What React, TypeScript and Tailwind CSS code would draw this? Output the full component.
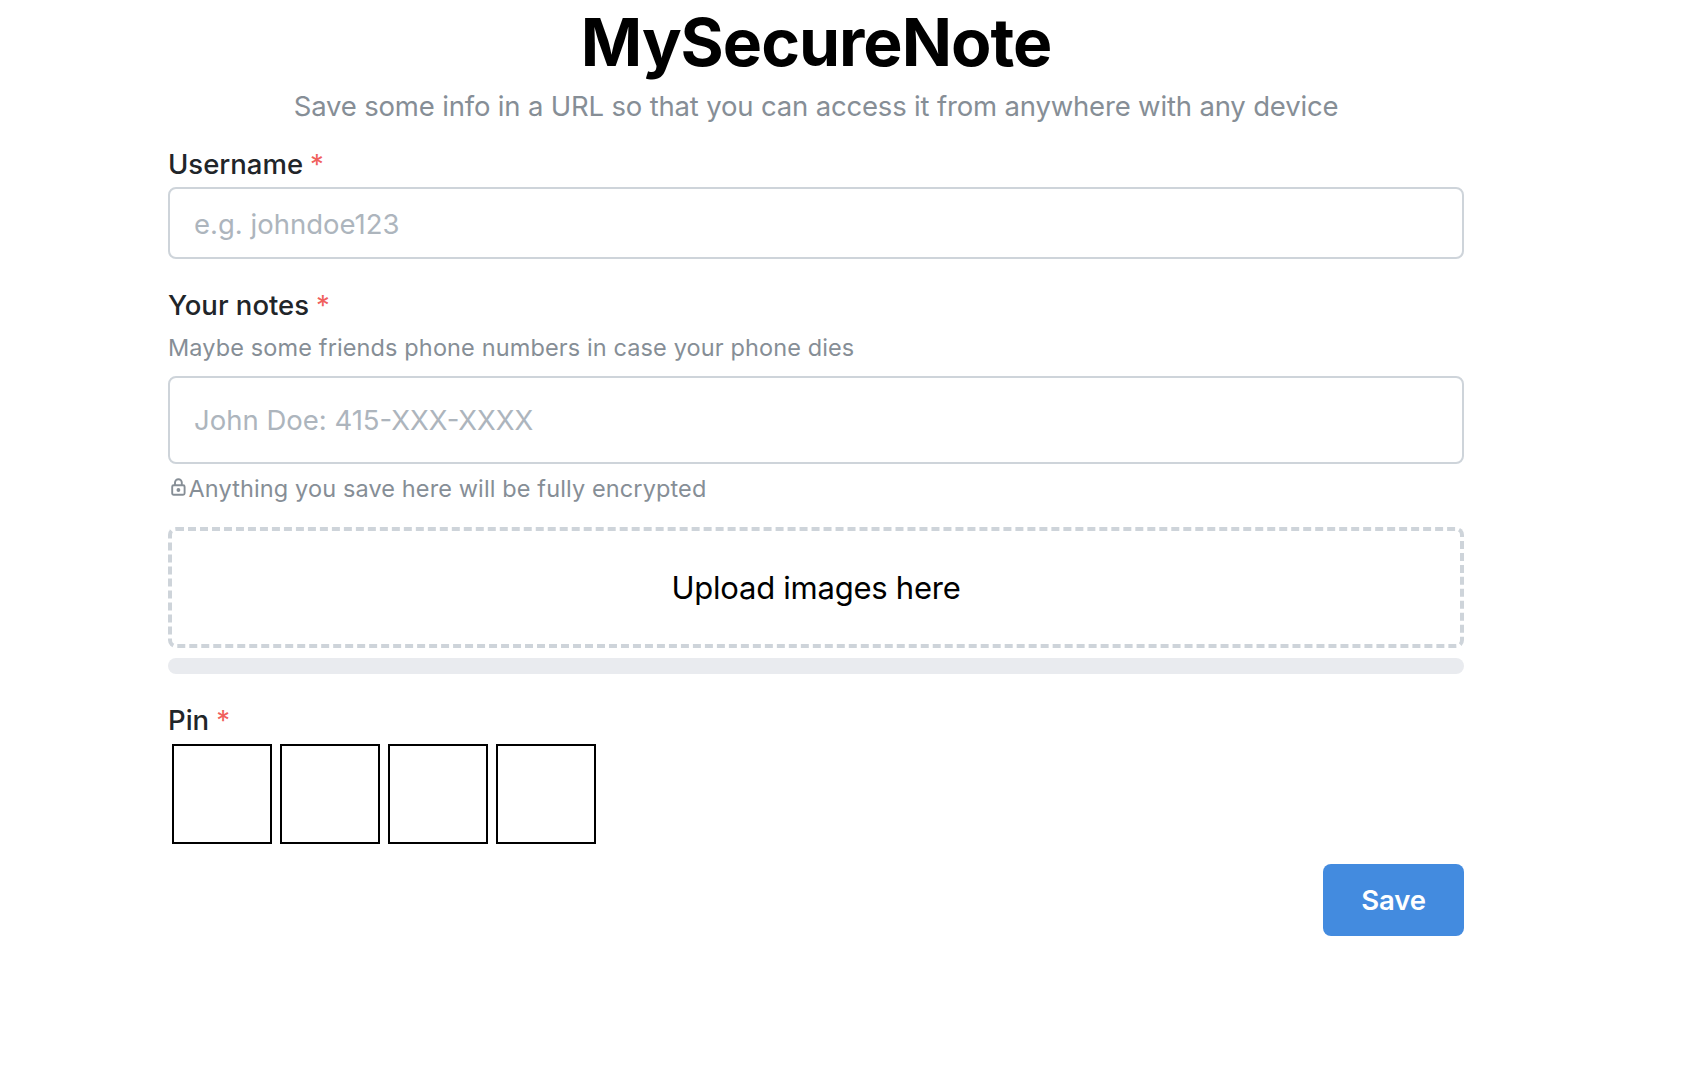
import type { ReactNode } from "react";

function Label({ children }: { children: ReactNode }) {
  return (
    <div className="flex h-[44px] items-center whitespace-pre text-[27.5px] font-medium leading-[44px] text-[#212529]">
      <span>{children}</span>
      <span className="ml-[7px] font-normal text-[#f0605d]">*</span>
    </div>
  );
}

function LockIcon() {
  return (
    <svg className="ml-[2.5px] mt-[-3px] h-[18px] w-[15px] shrink-0" viewBox="0 0 15 18" fill="none" stroke="#868e96" strokeWidth="1.9">
      <rect x="1.2" y="7.2" width="12.4" height="9.6" rx="1.5" />
      <path d="M4 7V4.6a3.4 3.4 0 0 1 6.8 0V7" />
      <circle cx="7.4" cy="12" r="1.9" fill="#868e96" stroke="none" />
    </svg>
  );
}

export default function App() {
  return (
    <div className="h-[1068px] w-full overflow-hidden bg-white font-['Inter',sans-serif] text-black">
      <div className="ml-[168px] flex w-[1296px] flex-col">
        <h1 className="h-[84px] text-center text-[66px] font-bold leading-[84px] tracking-[-1px]">MySecureNote</h1>
        <p className="h-[44px] whitespace-nowrap text-center text-[27.5px] leading-[44px] tracking-[-0.175px] text-[#868e96]">
          Save some info in a URL so that you can access it from anywhere with any device
        </p>

        <div className="mt-[14px]">
          <Label>Username</Label>
        </div>
        <input
          className="mt-px h-[72px] w-full rounded-[8px] border-2 border-[#ced4da] px-6 pt-[2px] text-[27.5px] text-[#212529] outline-none placeholder:text-[#adb5bd]"
          placeholder="e.g. johndoe123"
        />

        <div className="mt-[24px]">
          <Label>Your notes</Label>
        </div>
        <p className="h-[41px] whitespace-nowrap text-[23.5px] leading-[41px] tracking-[0.12px] text-[#868e96]">
          Maybe some friends phone numbers in case your phone dies
        </p>
        <textarea
          rows={1}
          className="mt-[8px] block h-[88px] w-full resize-none overflow-hidden rounded-[8px] border-2 border-[#ced4da] px-6 py-[20px] text-[27.5px] leading-[44px] text-[#212529] outline-none placeholder:text-[#adb5bd]"
          placeholder="John Doe: 415-XXX-XXXX"
        />
        <div className="mt-[4px] flex h-[40px] items-center whitespace-nowrap text-[23.5px] leading-[40px] tracking-[0.12px] text-[#868e96]">
          <LockIcon />
          <span className="ml-[3px] pt-[2px]">Anything you save here will be fully encrypted</span>
        </div>

        <div className="mt-[19px] flex h-[121px] items-center justify-center rounded-[8px] border-4 border-dashed border-[#ced4da] pt-[2px] text-[31px] tracking-[-0.25px]">
          Upload images here
        </div>
        <div className="mt-[10px] h-4 rounded-full bg-[#e9ebef]" />

        <div className="mt-[24px]">
          <Label>Pin</Label>
        </div>
        <div className="ml-1 mt-[2px] flex gap-2">
          {[0, 1, 2, 3].map((i) => (
            <input key={i} maxLength={1} className="size-[100px] border-2 border-black text-center text-[40px] outline-none" />
          ))}
        </div>
        <button className="mt-[20px] h-[72px] w-[141px] self-end rounded-[8px] bg-[#438bdf] pt-[2px] text-[27.5px] font-semibold tracking-[-0.1px] text-white">
          Save
        </button>
      </div>
    </div>
  );
}
